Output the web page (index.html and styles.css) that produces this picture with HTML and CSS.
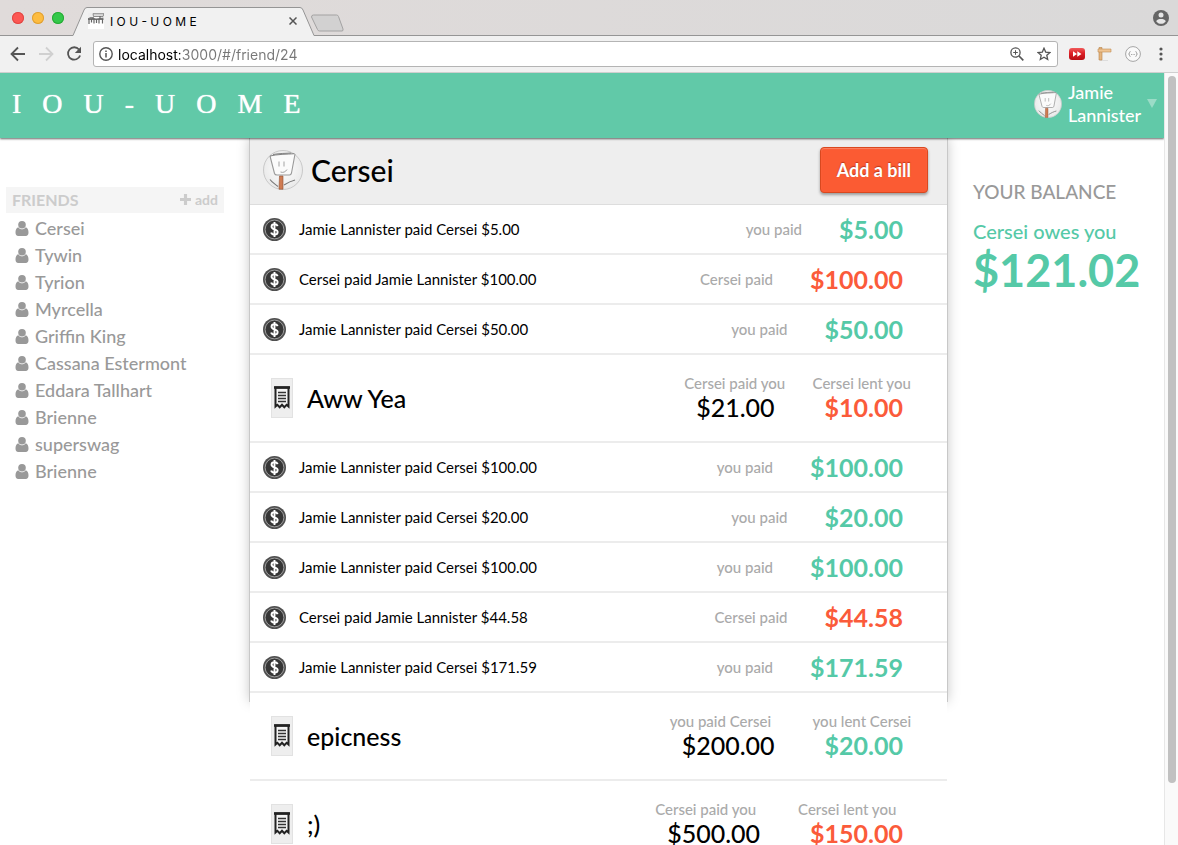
FILE: index.html
```html
<!DOCTYPE html>
<html lang="en">
<head>
<meta charset="utf-8">
<meta name="viewport" content="width=device-width, initial-scale=1">
<title>I O U - U O M E</title>
<link rel="stylesheet" href="styles.css">
</head>
<body>
<svg class="sprite" aria-hidden="true">
  <defs>
    <radialGradient id="skin" cx="50%" cy="45%" r="55%"><stop offset="0" stop-color="#fff"/><stop offset="1" stop-color="#e9e9e9"/></radialGradient>
    <linearGradient id="red" x1="0" y1="0" x2="0" y2="1"><stop offset="0" stop-color="#f05a5a"/><stop offset=".45" stop-color="#dc1f26"/><stop offset="1" stop-color="#b80d14"/></linearGradient>
  </defs>
  <symbol id="avatar" viewBox="0 0 40 40">
    <circle cx="20" cy="20" r="19.5" fill="url(#skin)" stroke="#c4c4c4" stroke-width=".9"/>
    <path d="M7 6L11.500 23.500Q12 25 14 25H26.500Q28 25 28.500 23L32 4" fill="#fbfbfb" stroke="#999" stroke-width="1.100" stroke-linejoin="round"/>
    <path d="M7 6C14 4.200 24 4.200 31.500 3.700M10 4.500C17 3.200 23 3.500 28 3" fill="none" stroke="#777" stroke-width=".9"/>
    <path d="M16 11.500V16.500M21 11.500V16.500M17.500 22C20 23 22.500 22 24 19.500" fill="none" stroke="#999" stroke-width=".9"/>
    <path d="M16.500 26H20V39.200H16Z" fill="#cf7b52" stroke="#8f5135" stroke-width=".6"/>
    <path d="M7 29.500C9 32.500 12 34 15 36.500M21 35C25 32.500 28 31 32 30" fill="none" stroke="#777" stroke-width="1.100"/>
  </symbol>
  <symbol id="coin" viewBox="0 0 24 24">
    <circle cx="12" cy="12" r="12" fill="#505050"/>
    <circle cx="12" cy="12" r="9.800" fill="#363636" stroke="#a0a0a0" stroke-width="1"/>
    <path d="M15.300 8.500C14.800 7.200 13.500 6.600 12 6.600C10.200 6.600 8.900 7.600 8.900 9.100C8.900 12.600 15.300 11.200 15.300 14.700C15.300 16.400 13.800 17.400 12 17.400C10.200 17.400 8.900 16.600 8.500 15.200M12 4.300V19.700" fill="none" stroke="#fff" stroke-width="2"/>
  </symbol>
  <symbol id="receipt" viewBox="0 0 16 24">
    <path d="M1.500 1.500H14.500V20.500L12.600 18.800L10.300 21.200L8 18.800L5.700 21.200L3.400 18.800L1.500 20.500Z" fill="#f4f4f4" stroke="#222" stroke-width="2"/>
    <path d="M0 1.500H16" stroke="#222" stroke-width="2.600"/>
    <path d="M4 6.500H12M4 9.500H12M4 12.500H12M4 15.500H12" stroke="#333" stroke-width="1.300"/>
  </symbol>
  <symbol id="person" viewBox="0 0 13 15">
    <circle cx="6.500" cy="3.800" r="3.800"/>
    <path d="M2.800 6.300C.700 6.700 0 9.200 0 11.600C0 13.800 1 15 2.700 15H10.300C12 15 13 13.800 13 11.600C13 9.200 12.300 6.700 10.200 6.300C8.200 9 4.800 9 2.800 6.300Z"/>
  </symbol>
</svg>

<header class="chrome">
  <div class="tabstrip">
    <div class="lights"><i class="light light-close"></i><i class="light light-min"></i><i class="light light-max"></i></div>
    <svg class="tabshape" viewBox="0 0 276 36" aria-hidden="true">
      <path d="M0 36L1 35.500L12 10Q13 7.500 15 7.500H228Q230 7.500 231 10L242 35.500V36Z" fill="#f1f1f1"/>
      <path d="M0 35.500H1L12 10Q13 7.500 15 7.500H228Q230 7.500 231 10L242 35.500" fill="none" stroke="#959595"/>
      <path d="M241.500 15H264.500Q266 15 266.500 16.500L271 29Q271.500 31 270 31H247.500Q246 31 245.500 29.500L239.500 17Q239.500 15 241.500 15Z" fill="#d2d1d1" stroke="#a3a2a2"/>
    </svg>
    <div class="tab">
      <svg class="favicon" viewBox="0 0 16 16" aria-hidden="true"><path d="M0 0H16V16H0Z" fill="#fff"/><path d="M0 0H16V4H0Z" fill="#eee"/><path d="M5 .700H16L15 3.500H5.500Z" fill="#ddd" stroke="#777" stroke-width=".8"/><path d="M0 5L3 4L8 5.500L15.500 4.500V7H0Z" fill="#777"/><path d="M1 6V11M3.500 6V9.500M6 6V10.500M8.500 6V10M11 6V10.500M14.500 6V10.500M5 4V6M12 3V6" stroke="#666" stroke-width="1.200"/></svg>
      <span class="tab-title">I O U - U O M E</span>
      <button class="plain tab-close" aria-label="Close tab"><svg viewBox="0 0 8 8" width="8" height="8"><path d="M.500.500L7.500 7.500M7.500.500L.500 7.500" stroke="#555" stroke-width="1.500"/></svg></button>
    </div>
    <button class="plain profile" aria-label="Profile"><svg viewBox="0 0 16 16" width="16" height="16"><circle cx="8" cy="8" r="8" fill="#656565"/><circle cx="8" cy="5" r="2.500" fill="#e6e6e6"/><path d="M3.200 11.200C3.700 9.500 6 8.900 8 8.900C10 8.900 12.300 9.500 12.800 11.200C11.700 12.900 10 13.800 8 13.800C6 13.800 4.300 12.900 3.200 11.200Z" fill="#e6e6e6"/></svg></button>
  </div>
  <div class="toolbar">
    <button class="plain" aria-label="Back"><svg viewBox="0 0 16 16" width="16" height="16"><path d="M15 8H2M8 1.500L1.500 8L8 14.500" fill="none" stroke="#555" stroke-width="1.800"/></svg></button>
    <button class="plain" aria-label="Forward" disabled><svg viewBox="0 0 16 16" width="16" height="16"><path d="M1 8H14M8 1.500L14.500 8L8 14.500" fill="none" stroke="#d0d0d0" stroke-width="1.800"/></svg></button>
    <button class="plain" aria-label="Reload"><svg viewBox="0 0 16 16" width="16" height="16"><path d="M13 3.500A6.200 6.200 0 1 0 14.100 9.500" fill="none" stroke="#555" stroke-width="1.800"/><path d="M15 .800V7H8.800Z" fill="#555"/></svg></button>
    <div class="omnibox">
      <svg viewBox="0 0 14 14" width="14" height="14" aria-hidden="true"><circle cx="7" cy="7" r="6.200" fill="none" stroke="#555" stroke-width="1.400"/><path d="M7 6V10.500M7 3.400V4.900" stroke="#555" stroke-width="1.500"/></svg>
      <input class="url" type="text" aria-label="Address" value="localhost:3000/#/friend/24">
      <button class="plain" aria-label="Zoom"><svg viewBox="0 0 14 14" width="14" height="14"><circle cx="5.500" cy="5.500" r="4.600" fill="none" stroke="#555" stroke-width="1.300"/><path d="M9 9L13.300 13.300" stroke="#555" stroke-width="1.700"/><path d="M3.200 5.500H7.800M5.500 3.200V7.800" stroke="#555"/></svg></button>
      <button class="plain" aria-label="Bookmark"><svg viewBox="0 0 14 14" width="14" height="14"><path d="M7 1.200L8.700 5.100L13 5.500L9.800 8.300L10.700 12.500L7 10.300L3.300 12.500L4.200 8.300L1 5.500L5.300 5.100Z" fill="none" stroke="#555" stroke-width="1.300"/></svg></button>
    </div>
    <div class="extensions">
      <button class="plain" aria-label="Playback speed"><svg viewBox="0 0 16 16" width="16" height="16"><rect y="2" width="16" height="12" rx="3" fill="url(#red)"/><path d="M4 5.200L8 8L4 10.800ZM8.300 5.200L12.500 8L8.300 10.800Z" fill="#fff"/></svg></button>
      <button class="plain" aria-label="Ruler"><svg viewBox="0 0 16 16" width="16" height="16"><path d="M3 14.500H11" stroke="#ddd"/><path d="M2 1.500H5V14H2Z" fill="#e5b57e" stroke="#b98449" stroke-width=".6"/><path d="M1 3H14V6H1Z" fill="#f0c492" stroke="#c08d54" stroke-width=".6"/></svg></button>
      <button class="plain" aria-label="JSON viewer"><svg viewBox="0 0 16 16" width="16" height="16"><circle cx="8" cy="8" r="7.400" fill="#fafafa" stroke="#a5a5a5"/><path d="M5.500 5.500Q4.500 5.500 4.500 6.800Q4.500 8 3.600 8Q4.500 8 4.500 9.200Q4.500 10.500 5.500 10.500M10.500 5.500Q11.500 5.500 11.500 6.800Q11.500 8 12.400 8Q11.500 8 11.500 9.200Q11.500 10.500 10.500 10.500" fill="none" stroke="#999" stroke-width=".9"/><path d="M6 8.500H10" stroke="#aaa" stroke-dasharray="1 .6"/></svg></button>
      <button class="plain" aria-label="Menu"><svg viewBox="0 0 16 16" width="16" height="16"><circle cx="8" cy="3" r="1.600" fill="#555"/><circle cx="8" cy="8" r="1.600" fill="#555"/><circle cx="8" cy="13" r="1.600" fill="#555"/></svg></button>
    </div>
  </div>
</header>

<div class="viewport">
  <div class="page">
    <nav class="topbar">
      <a class="logo" href="#/">I   O   U   -   U   O   M   E</a>
      <button class="plain account">
        <svg class="account-photo" aria-hidden="true"><use href="#avatar"/></svg>
        <span class="account-name">Jamie Lannister</span>
        <span class="caret"></span>
      </button>
    </nav>
    <div class="columns">
      <aside class="sidebar">
        <div class="friends-head">
          <h2 class="friends-title">FRIENDS</h2>
          <button class="plain add-friend"><svg viewBox="0 0 12 12" width="11" height="11" aria-hidden="true"><path d="M6 0V12M0 6H12" stroke="currentColor" stroke-width="3.400"/></svg>add</button>
        </div>
        <ul class="friends">
          <li><a href="#/friend/24"><svg><use href="#person"/></svg>Cersei</a></li>
          <li><a href="#/friend/25"><svg><use href="#person"/></svg>Tywin</a></li>
          <li><a href="#/friend/26"><svg><use href="#person"/></svg>Tyrion</a></li>
          <li><a href="#/friend/27"><svg><use href="#person"/></svg>Myrcella</a></li>
          <li><a href="#/friend/28"><svg><use href="#person"/></svg>Griffin King</a></li>
          <li><a href="#/friend/29"><svg><use href="#person"/></svg>Cassana Estermont</a></li>
          <li><a href="#/friend/30"><svg><use href="#person"/></svg>Eddara Tallhart</a></li>
          <li><a href="#/friend/31"><svg><use href="#person"/></svg>Brienne</a></li>
          <li><a href="#/friend/32"><svg><use href="#person"/></svg>superswag</a></li>
          <li><a href="#/friend/33"><svg><use href="#person"/></svg>Brienne</a></li>
        </ul>
      </aside>

      <main class="panel">
        <div class="panel-head">
          <svg class="photo" aria-hidden="true"><use href="#avatar"/></svg>
          <h1 class="panel-title">Cersei</h1>
          <button class="add-bill">Add a bill</button>
        </div>
        <ul class="activity">
          <li class="payment"><svg class="coin"><use href="#coin"/></svg><span class="memo">Jamie Lannister paid Cersei $5.00</span><span class="label">you paid</span><span class="amount plus">$5.00</span></li>
          <li class="payment"><svg class="coin"><use href="#coin"/></svg><span class="memo">Cersei paid Jamie Lannister $100.00</span><span class="label">Cersei paid</span><span class="amount minus">$100.00</span></li>
          <li class="payment"><svg class="coin"><use href="#coin"/></svg><span class="memo">Jamie Lannister paid Cersei $50.00</span><span class="label">you paid</span><span class="amount plus">$50.00</span></li>
          <li class="bill"><span class="receipt"><svg><use href="#receipt"/></svg></span><h3 class="bill-title">Aww Yea</h3>
            <div class="share"><span class="label">Cersei paid you</span><span class="amount">$21.00</span></div>
            <div class="share"><span class="label">Cersei lent you</span><span class="amount minus">$10.00</span></div></li>
          <li class="payment"><svg class="coin"><use href="#coin"/></svg><span class="memo">Jamie Lannister paid Cersei $100.00</span><span class="label">you paid</span><span class="amount plus">$100.00</span></li>
          <li class="payment"><svg class="coin"><use href="#coin"/></svg><span class="memo">Jamie Lannister paid Cersei $20.00</span><span class="label">you paid</span><span class="amount plus">$20.00</span></li>
          <li class="payment"><svg class="coin"><use href="#coin"/></svg><span class="memo">Jamie Lannister paid Cersei $100.00</span><span class="label">you paid</span><span class="amount plus">$100.00</span></li>
          <li class="payment"><svg class="coin"><use href="#coin"/></svg><span class="memo">Cersei paid Jamie Lannister $44.58</span><span class="label">Cersei paid</span><span class="amount minus">$44.58</span></li>
          <li class="payment"><svg class="coin"><use href="#coin"/></svg><span class="memo">Jamie Lannister paid Cersei $171.59</span><span class="label">you paid</span><span class="amount plus">$171.59</span></li>
          <li class="bill"><span class="receipt"><svg><use href="#receipt"/></svg></span><h3 class="bill-title">epicness</h3>
            <div class="share"><span class="label">you paid Cersei</span><span class="amount">$200.00</span></div>
            <div class="share"><span class="label">you lent Cersei</span><span class="amount plus">$20.00</span></div></li>
          <li class="bill"><span class="receipt"><svg><use href="#receipt"/></svg></span><h3 class="bill-title">;)</h3>
            <div class="share"><span class="label">Cersei paid you</span><span class="amount">$500.00</span></div>
            <div class="share"><span class="label">Cersei lent you</span><span class="amount minus">$150.00</span></div></li>
        </ul>
      </main>

      <aside class="balance">
        <h2 class="balance-title">YOUR BALANCE</h2>
        <p class="balance-who">Cersei owes you</p>
        <p class="balance-total">$121.02</p>
      </aside>
    </div>
  </div>
  <div class="scrollbar"><div class="thumb"></div></div>
</div>
</body>
</html>
```
FILE: styles.css
```css
* { box-sizing: border-box; }
body {
  margin: 0;
  height: 100vh;
  display: flex;
  flex-direction: column;
  overflow: hidden;
  background: #fff;
  color: #000;
  font-family: Lato, "Open Sans", sans-serif;
  font-size: 15px;
}
h1, h2, h3, p, ul { margin: 0; padding: 0; font-weight: 400; }
ul { list-style: none; }
a { color: inherit; text-decoration: none; }
svg { display: block; flex: none; }
.sprite { position: absolute; width: 0; height: 0; }
.plain {
  display: flex;
  align-items: center;
  border: 0;
  padding: 0;
  background: none;
  color: inherit;
  font: inherit;
  text-align: left;
}

/* browser window */
.chrome { flex: none; font-family: Inter, Roboto, sans-serif; }
.tabstrip {
  height: 36px;
  display: flex;
  align-items: center;
  padding: 0 9px 0 12px;
  background: linear-gradient(90deg, #e0dbda, #dad9d9);
  box-shadow: inset 0 -1px #959595;
  position: relative;
}
.lights { display: flex; gap: 8px; margin-right: 24px; }
.light { width: 12px; height: 12px; border-radius: 50%; }
.light-close { background: #fc5753; box-shadow: inset 0 0 0 1px #df4744; }
.light-min { background: #fdbc40; box-shadow: inset 0 0 0 1px #de9f34; }
.light-max { background: #34c84a; box-shadow: inset 0 0 0 1px #27aa35; }
.tabshape { position: absolute; left: 72px; top: 0; width: 276px; height: 36px; }
.tab { position: relative; width: 209px; display: flex; align-items: center; gap: 6px; padding-top: 6px; }
.favicon { width: 16px; height: 16px; }
.tab-title { flex: 1; font-size: 12px; white-space: pre; }
.profile { margin-left: auto; }
.toolbar {
  height: 37px;
  display: flex;
  align-items: center;
  gap: 12px;
  padding: 0 9px 0 10px;
  background: #f1f1f1;
  border-bottom: 1px solid #cfcfcf;
}
.omnibox {
  flex: 1;
  height: 26px;
  display: flex;
  align-items: center;
  gap: 13px;
  margin: 0 -1px;
  padding: 0 6px 0 5px;
  border: 1px solid #b4b4b4;
  border-radius: 3px;
  background: #fff;
}
.url {
  flex: 1;
  min-width: 0;
  margin-left: -8px;
  border: 0;
  padding: 0;
  outline: 0;
  font: 14px Inter, Roboto, sans-serif;
  background: linear-gradient(90deg, #000 62px, #777 62px);
  -webkit-background-clip: text;
  background-clip: text;
  -webkit-text-fill-color: transparent;
}
.extensions { display: flex; gap: 12px; }

/* app */
.viewport { flex: 1; min-height: 0; display: flex; }
.page { flex: 1; min-width: 0; display: flex; flex-direction: column; overflow: hidden; }
.topbar {
  flex: none;
  height: 65px;
  display: flex;
  align-items: center;
  justify-content: space-between;
  padding: 0 7px 4px 12px;
  background: #61c9a8;
  color: #fff;
  box-shadow: 0 1px 2px rgba(0, 0, 0, .6);
  position: relative;
}
.logo { font: 28px "Liberation Serif", serif; white-space: pre; text-shadow: 0 0 1px #fff; }
.account { gap: 6px; }
.account-photo { width: 28px; height: 28px; }
.account-name { width: 73px; font-size: 18px; line-height: 23px; font-weight: 500; }
.caret { border: 5px solid transparent; border-top: 9px solid #9bdcc7; border-bottom: 0; }

.columns { flex: 1; min-height: 0; display: flex; }
.sidebar { width: 250px; padding: 49px 26px 0 6px; color: #999; font-size: 18px; }
.friends-head {
  height: 26px;
  display: flex;
  align-items: center;
  justify-content: space-between;
  padding: 0 6px 1px;
  background: #f5f5f5;
  color: #ccc;
}
.friends-title { font-size: 16px; font-weight: 700; }
.add-friend { gap: 4px; font-size: 14px; font-weight: 700; }
.friends { padding: 2px 9px 0; }
.friends a { display: flex; align-items: center; gap: 6px; line-height: 27px; font-weight: 500; }
.friends svg { width: 14px; height: 15px; fill: #999; }

.panel {
  flex: 1;
  min-width: 0;
  height: calc(100% - 144px);
  box-shadow: 0 0 0 1px #c8c8c8, 0 0 12px rgba(0, 0, 0, .25);
}
.panel-head {
  height: 67px;
  display: flex;
  align-items: center;
  padding: 0 19px 2px 13px;
  background: #eee;
  border-bottom: 1px solid #ddd;
}
.photo { width: 40px; height: 40px; }
.panel-title { flex: 1; margin-left: 8px; font-size: 30px; font-weight: 500; }
.add-bill {
  height: 46px;
  padding: 0 16px;
  border: 1px solid #d9481f;
  border-radius: 4px;
  background: #fb5b33;
  box-shadow: 0 2px 3px rgba(0, 0, 0, .35), inset 0 1px 1px rgba(255, 255, 255, .25);
  color: #fff;
  font: 700 18px Lato, sans-serif;
  text-shadow: 0 -1px 1px rgba(120, 20, 0, .5);
}
.activity { background: #fff; }
.payment, .bill {
  display: flex;
  align-items: center;
  padding: 0 32px 0 13px;
  border-bottom: 2px solid #ececec;
}
.payment { height: 50px; }
.bill { height: 88px; padding-left: 21px; }
.coin { width: 23px; height: 23px; }
.memo { flex: 1; margin-left: 13px; }
.label { color: #aaa; line-height: 20px; font-weight: 500; }
.amount { padding: 0 12px; font-size: 25px; line-height: 28px; font-weight: 500; }
.payment .amount { margin-left: 25px; }
.amount.plus { color: #55c9a7; font-weight: 700; }
.amount.minus { color: #fb5b3a; font-weight: 700; }
.receipt { width: 22px; height: 40px; display: grid; place-items: center; background: #eee; border: 1px solid #e2e2e2; }
.receipt svg { width: 16px; height: 24px; }
.bill-title { flex: 1; margin-left: 14px; font-size: 25px; font-weight: 500; }
.share { display: flex; flex-direction: column; margin-left: 26px; padding-bottom: 2px; white-space: nowrap; }

.balance { width: 217px; padding: 42px 20px 0 26px; color: #55c9a7; }
.balance-title { color: #999; font-size: 19px; line-height: 24px; font-weight: 500; }
.balance-who { margin-top: 15px; font-size: 20px; line-height: 24px; font-weight: 500; }
.balance-total { font-size: 45px; line-height: 54px; font-weight: 700; }

.scrollbar { flex: none; width: 14px; padding: 3px 2px 0 3px; background: #fafafa; border-left: 1px solid #e7e7e7; }
.thumb { width: 8px; height: 92%; border-radius: 4px; background: #c1c1c1; }
```
